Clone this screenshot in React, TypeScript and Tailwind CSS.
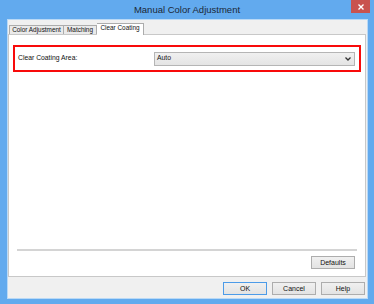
import React from 'react';

const font = { fontFamily: '"Liberation Sans", "DejaVu Sans", sans-serif' };

type BtnProps = { label: React.ReactNode; primary?: boolean; className?: string };

function Btn({ label, primary, className = '' }: BtnProps) {
  return (
    <button
      type="button"
      className={`flex h-[13px] w-[44px] items-center justify-center border bg-gradient-to-b from-[#f0f0f0] to-[#e3e3e3] text-[7px] leading-none text-[#111] ${
        primary ? 'border-[#4c9be8]' : 'border-[#adadad]'
      } ${className}`}
    >
      {label}
    </button>
  );
}

export default function App() {
  return (
    <div className="flex h-[304px] w-[374px] flex-col bg-[#62aaee]" style={font}>
      {/* title bar */}
      <div className="relative flex h-[19px] shrink-0 items-center justify-center">
        <span className="text-[9.5px] leading-none text-[#1b2836]">Manual Color Adjustment</span>
        <div className="absolute right-[4px] top-0 flex h-[13px] w-[19px] items-center justify-center bg-[#c9524e]">
          <svg width="6" height="6" viewBox="0 0 6 6">
            <path d="M0.5 0.5 L5.5 5.5 M5.5 0.5 L0.5 5.5" stroke="#fff" strokeWidth="1.4" />
          </svg>
        </div>
      </div>

      {/* client area */}
      <div className="mx-[6px] mb-[5px] ml-[7px] flex flex-1 flex-col border border-[#b9d9f6] bg-[#f0f0f0]">
        {/* tabs */}
        <div className="mt-[3px] flex h-[11px] items-end pl-[1px] text-[6.4px] leading-none text-[#111]">
          <div className="flex h-[9px] w-[55px] items-center justify-center border border-b-0 border-[#acacac] bg-[#eaeaea]">
            Color Adjustment
          </div>
          <div className="flex h-[9px] w-[33px] items-center justify-center border border-b-0 border-l-0 border-[#acacac] bg-[#eaeaea]">
            Matching
          </div>
          <div className="relative z-10 -mb-[1px] flex h-[12px] w-[47px] items-center justify-center border border-b-0 border-l-0 border-[#acacac] bg-white pb-[2px]">
            Clear Coating
          </div>
        </div>

        {/* tab panel */}
        <div className="mr-[1px] flex h-[243px] flex-col border border-[#c8c8c8] bg-white">
          <div className="mx-[4px] mt-[10px] flex h-[27px] items-center border-2 border-[#f80a0a] pl-[3px] pr-[4px]">
            <span className="w-[136px] text-[6.8px] leading-none text-[#111]">Clear Coating Area:</span>
            <div className="flex h-[14px] flex-1 items-center justify-between border border-[#b5b5b5] bg-gradient-to-b from-[#f0f0f0] to-[#e4e4e4] pl-[2px] pr-[3px]">
              <span className="text-[6.8px] leading-none text-[#111]">Auto</span>
              <svg width="6" height="4" viewBox="0 0 6 4">
                <path d="M0.5 0.5 L3 3 L5.5 0.5" stroke="#333" strokeWidth="1.3" fill="none" />
              </svg>
            </div>
          </div>

          <div className="flex-1" />

          <div className="mx-[8px] h-[2px] bg-[#d4d4d4]" />
          <div className="flex justify-end pb-[7px] pr-[10px] pt-[5px]">
            <Btn label="Defaults" />
          </div>
        </div>

        {/* dialog buttons */}
        <div className="flex justify-end gap-[5px] pr-[2px] pt-[5px]">
          <Btn label="OK" primary />
          <Btn label="Cancel" />
          <Btn label="Help" />
        </div>
      </div>
    </div>
  );
}
